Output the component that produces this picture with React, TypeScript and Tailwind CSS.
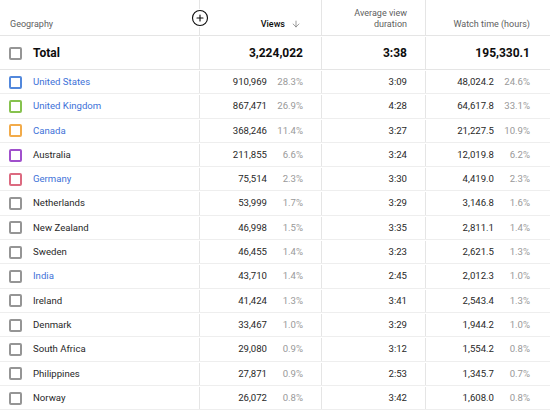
import { ArrowDown, CirclePlus } from 'lucide-react'

type Row = {
  name: string
  link: boolean
  box: string
  views: string
  viewsPct: string
  avg: string
  watch: string
  watchPct: string
}

const rows: Row[] = [
  { name: 'United States', link: true, box: 'border-[#5288dc]', views: '910,969', viewsPct: '28.3%', avg: '3:09', watch: '48,024.2', watchPct: '24.6%' },
  { name: 'United Kingdom', link: true, box: 'border-[#86c24e]', views: '867,471', viewsPct: '26.9%', avg: '4:28', watch: '64,617.8', watchPct: '33.1%' },
  { name: 'Canada', link: true, box: 'border-[#f2ab4a]', views: '368,246', viewsPct: '11.4%', avg: '3:27', watch: '21,227.5', watchPct: '10.9%' },
  { name: 'Australia', link: false, box: 'border-[#a050cc]', views: '211,855', viewsPct: '6.6%', avg: '3:24', watch: '12,019.8', watchPct: '6.2%' },
  { name: 'Germany', link: true, box: 'border-[#dc6a80]', views: '75,514', viewsPct: '2.3%', avg: '3:30', watch: '4,419.0', watchPct: '2.3%' },
  { name: 'Netherlands', link: false, box: 'border-[#959595]', views: '53,999', viewsPct: '1.7%', avg: '3:29', watch: '3,146.8', watchPct: '1.6%' },
  { name: 'New Zealand', link: false, box: 'border-[#959595]', views: '46,998', viewsPct: '1.5%', avg: '3:35', watch: '2,811.1', watchPct: '1.4%' },
  { name: 'Sweden', link: false, box: 'border-[#959595]', views: '46,455', viewsPct: '1.4%', avg: '3:23', watch: '2,621.5', watchPct: '1.3%' },
  { name: 'India', link: true, box: 'border-[#959595]', views: '43,710', viewsPct: '1.4%', avg: '2:45', watch: '2,012.3', watchPct: '1.0%' },
  { name: 'Ireland', link: false, box: 'border-[#959595]', views: '41,424', viewsPct: '1.3%', avg: '3:41', watch: '2,543.4', watchPct: '1.3%' },
  { name: 'Denmark', link: false, box: 'border-[#959595]', views: '33,467', viewsPct: '1.0%', avg: '3:29', watch: '1,944.2', watchPct: '1.0%' },
  { name: 'South Africa', link: false, box: 'border-[#959595]', views: '29,080', viewsPct: '0.9%', avg: '3:12', watch: '1,554.2', watchPct: '0.8%' },
  { name: 'Philippines', link: false, box: 'border-[#959595]', views: '27,871', viewsPct: '0.9%', avg: '2:53', watch: '1,345.7', watchPct: '0.7%' },
  { name: 'Norway', link: false, box: 'border-[#959595]', views: '26,072', viewsPct: '0.8%', avg: '3:42', watch: '1,608.0', watchPct: '0.8%' },
]

export default function App() {
  return (
    <div className="w-[550px] h-[411px] overflow-hidden bg-white text-[#282828] font-['Roboto',sans-serif]">
      {/* header */}
      <div className="relative flex h-[36px] border-b border-[#e5e5e5] text-[9px] leading-[11px] text-[#606060]">
        <div className="w-[200px] border-r border-[#e5e5e5] flex items-end pl-[10px] pb-[5px]">Geography</div>
        <div className="w-[122px] border-r border-[#e5e5e5] flex items-end justify-end gap-[6px] pr-[20px] pb-[5px]">
          <span className="font-medium text-[#0d0d0d]">Views</span>
          <ArrowDown className="w-[10px] h-[10px] mb-[1px] text-[#606060]" strokeWidth={1.5} />
        </div>
        <div className="w-[104px] border-r border-[#e5e5e5] flex items-end justify-end text-right pr-[18px] pb-[5px]">
          Average view
          <br />
          duration
        </div>
        <div className="w-[124px] flex items-end justify-end pr-[20px] pb-[5px]">Watch time (hours)</div>
        <div className="absolute left-[191px] top-[9px] bg-white rounded-full">
          <CirclePlus className="w-[18px] h-[18px] text-[#0d0d0d]" strokeWidth={1.5} />
        </div>
      </div>

      {/* total */}
      <div className="flex h-[34px] pt-[1px] border-b border-[#e5e5e5] text-[12px] font-bold text-[#0d0d0d]">
        <div className="w-[200px] border-r border-[#e5e5e5] flex items-center pl-[9px] gap-[11px]">
          <span className="w-[13px] h-[13px] rounded-[2px] border-2 border-[#959595]" />
          Total
        </div>
        <div className="w-[122px] border-r border-[#e5e5e5] flex items-center justify-end pr-[18px]">3,224,022</div>
        <div className="w-[104px] border-r border-[#e5e5e5] flex items-center justify-end pr-[18px]">3:38</div>
        <div className="w-[124px] flex items-center justify-end pr-[20px]">195,330.1</div>
      </div>

      {rows.map((r) => (
        <div key={r.name} className="flex h-[24.3px] pt-[1px] border-b border-[#eeeeee] text-[9.6px]">
          <div className="w-[200px] border-r border-[#e5e5e5] flex items-center pl-[9px] gap-[11px]">
            <span className={`w-[13px] h-[13px] rounded-[2px] border-2 ${r.box}`} />
            <span className={r.link ? 'text-[#3e72d8]' : 'text-[#282828]'}>{r.name}</span>
          </div>
          <div className="w-[122px] border-r border-[#e5e5e5] flex items-center justify-end pr-[18px]">
            <span className="text-[#282828]">{r.views}</span>
            <span className="w-[36px] text-right text-[#999999]">{r.viewsPct}</span>
          </div>
          <div className="w-[104px] border-r border-[#e5e5e5] flex items-center justify-end pr-[18px]">{r.avg}</div>
          <div className="w-[124px] flex items-center justify-end pr-[20px]">
            <span>{r.watch}</span>
            <span className="w-[36px] text-right text-[#999999]">{r.watchPct}</span>
          </div>
        </div>
      ))}
    </div>
  )
}
